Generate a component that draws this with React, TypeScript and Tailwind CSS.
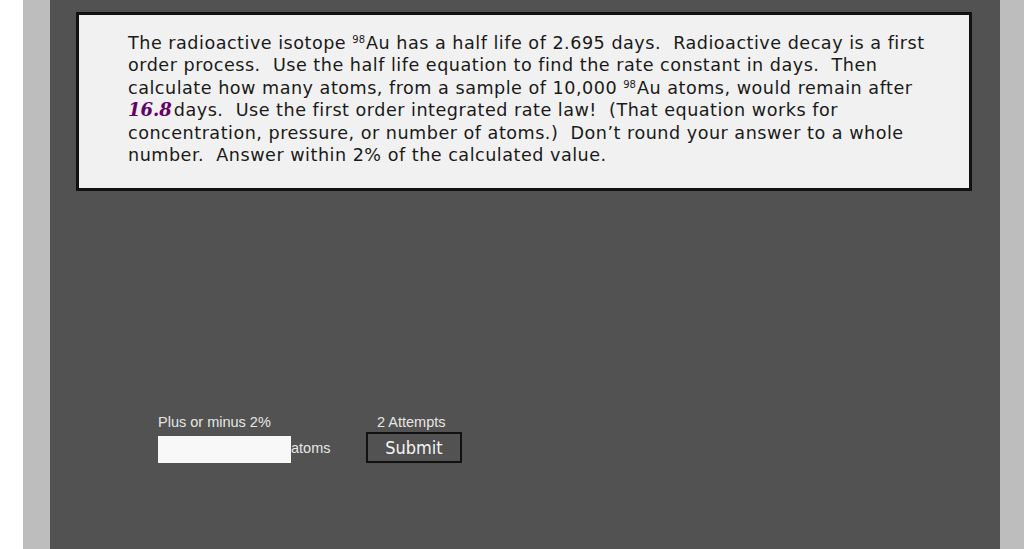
import React from "react";

const Sup = ({ children }: { children: React.ReactNode }) => (
  <sup className="text-[10px] top-[-6px] mr-[1px] tracking-normal">{children}</sup>
);

export default function App() {
  return (
    <div className="w-[1024px] h-[549px] flex bg-white overflow-hidden">
      <div className="w-[23px] bg-white" />
      <div className="w-[27px] bg-[#bdbdbd]" />
      <div className="w-[950px] bg-[#525252] pt-[12px] pl-[26px] flex flex-col">
        <div
          className="w-[896px] h-[179px] border-[3px] border-[#111111] bg-[#f1f1f1] pl-[49px] pt-[17px] text-[#1a1a1a] text-[17.6px] tracking-[0.5px] leading-[22.4px] whitespace-pre"
          style={{ fontFamily: '"DejaVu Sans", Verdana, sans-serif' }}
        >
          <div>
            The radioactive isotope <Sup>98</Sup>Au has a half life of 2.695 days.  Radioactive decay is a first
          </div>
          <div>order process.  Use the half life equation to find the rate constant in days.  Then</div>
          <div>
            calculate how many atoms, from a sample of 10,000 <Sup>98</Sup>Au atoms, would remain after
          </div>
          <div>
            <span
              className="font-bold italic text-[#660066] mr-[2px] text-[18px] tracking-normal"
              style={{ fontFamily: '"DejaVu Serif", Georgia, serif' }}
            >
              16.8
            </span>
            days.  Use the first order integrated rate law!  (That equation works for
          </div>
          <div>concentration, pressure, or number of atoms.)  Don’t round your answer to a whole</div>
          <div>number.  Answer within 2% of the calculated value.</div>
        </div>

        <div
          className="mt-[223px] ml-[82px] flex items-start text-[#e6e6e6] text-[14.5px] leading-[16px]"
          style={{ fontFamily: '"Liberation Sans", Arial, sans-serif' }}
        >
          <div className="w-[208px] flex flex-col">
            <div>Plus or minus 2%</div>
            <div className="mt-[6px] flex items-start">
              <input
                type="text"
                className="w-[133px] h-[27px] bg-[#f8f8f8] border-0 outline-none p-0"
              />
              <span className="mt-[4px]">atoms</span>
            </div>
          </div>
          <div className="flex flex-col">
            <div className="pl-[11px]">2 Attempts</div>
            <button
              className="mt-[2px] w-[96px] h-[31px] border-2 border-[#111111] bg-transparent text-[#f4f4f4] text-[18px] flex items-center justify-center p-0"
              style={{ fontFamily: '"DejaVu Sans Condensed", "DejaVu Sans", sans-serif', fontStretch: "condensed" }}
            >
              Submit
            </button>
          </div>
        </div>
      </div>
      <div className="flex-1 bg-[#bdbdbd]" />
    </div>
  );
}
